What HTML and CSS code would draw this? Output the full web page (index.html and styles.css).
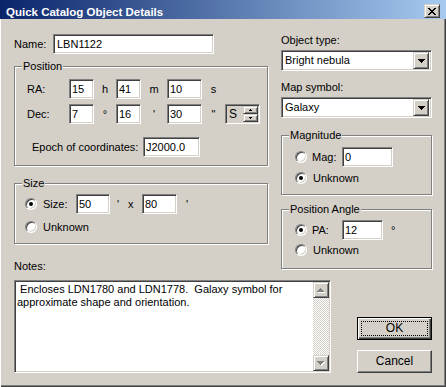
FILE: index.html
```html
<!DOCTYPE html>
<html>
<head>
    <meta charset="utf-8">
    <title>Quick Catalog Object Details</title>
    <link rel="stylesheet" href="styles.css">
</head>
<body>
    <div class="window">
        <div class="titlebar">
            <span class="title">Quick Catalog Object Details</span>
            <span class="close">
                <svg width="8" height="7" viewBox="0 0 8 7" shape-rendering="crispEdges"><path d="M0 0h2v1H0zM6 0h2v1H6zM1 1h2v1H1zM5 1h2v1H5zM2 2h4v1H2zM3 3h2v1H3zM2 4h4v1H2zM1 5h2v1H1zM5 5h2v1H5zM0 6h2v1H0zM6 6h2v1H6z" fill="#000"/></svg>
            </span>
        </div><!-- .titlebar -->

        <div class="content">
            <div class="top">
                <div class="left-col">
                    <div class="name-row">
                        <span class="name-label">Name:</span>
                        <input class="field name-field" value="LBN1122">
                    </div>

                    <div class="group position-group">
                        <span class="legend">Position</span>
                        <div class="coord-row">
                            <span>RA:</span>
                            <input class="field" value="15">
                            <span class="unit">h</span>
                            <input class="field" value="41">
                            <span class="unit">m</span>
                            <input class="field" value="10">
                            <span class="unit">s</span>
                        </div>
                        <div class="coord-row">
                            <span>Dec:</span>
                            <input class="field" value="7">
                            <span class="unit">°</span>
                            <input class="field" value="16">
                            <span class="unit">'</span>
                            <input class="field" value="30">
                            <span class="unit">"</span>
                            <div class="spin">
                                <span class="spin-text">S</span>
                                <div class="spin-btns">
                                    <span class="spin-btn"><svg width="3" height="2" viewBox="0 0 3 2" shape-rendering="crispEdges"><path d="M1 0h1v1H1zM0 1h3v1H0z" fill="#000"/></svg></span>
                                    <span class="spin-btn"><svg width="3" height="2" viewBox="0 0 3 2" shape-rendering="crispEdges"><path d="M0 0h3v1H0zM1 1h1v1H1z" fill="#000"/></svg></span>
                                </div>
                            </div>
                        </div>
                        <div class="epoch-row">
                            <span class="epoch-label">Epoch of coordinates:</span>
                            <input class="field epoch-field" value="J2000.0">
                        </div>
                    </div><!-- .position-group -->

                    <div class="group size-group">
                        <span class="legend">Size</span>
                        <div class="opt-row">
                            <span class="radio on"></span>
                            <span class="opt-label size-label">Size:</span>
                            <input class="field size-field" value="50">
                            <span class="min1">'</span>
                            <span class="times">x</span>
                            <input class="field size-field2" value="80">
                            <span class="min2">'</span>
                        </div>
                        <div class="opt-row">
                            <span class="radio"></span>
                            <span class="opt-label">Unknown</span>
                        </div>
                    </div><!-- .size-group -->

                    <div class="notes-label">Notes:</div>
                </div><!-- .left-col -->

                <div class="right-col">
                    <div class="field-label">Object type:</div>
                    <div class="select">
                        <span class="select-text">Bright nebula</span>
                        <span class="drop-btn"><svg width="7" height="4" viewBox="0 0 7 4" shape-rendering="crispEdges"><path d="M0 0h7v1H0zM1 1h5v1H1zM2 2h3v1H2zM3 3h1v1H3z" fill="#000"/></svg></span>
                    </div>
                    <div class="field-label map-label">Map symbol:</div>
                    <div class="select">
                        <span class="select-text">Galaxy</span>
                        <span class="drop-btn"><svg width="7" height="4" viewBox="0 0 7 4" shape-rendering="crispEdges"><path d="M0 0h7v1H0zM1 1h5v1H1zM2 2h3v1H2zM3 3h1v1H3z" fill="#000"/></svg></span>
                    </div>

                    <div class="group mag-group">
                        <span class="legend">Magnitude</span>
                        <div class="opt-row">
                            <span class="radio"></span>
                            <span class="opt-label short-label">Mag:</span>
                            <input class="field mag-field" value="0">
                        </div>
                        <div class="opt-row">
                            <span class="radio on"></span>
                            <span class="opt-label">Unknown</span>
                        </div>
                    </div><!-- .mag-group -->

                    <div class="group pa-group">
                        <span class="legend">Position Angle</span>
                        <div class="opt-row">
                            <span class="radio on"></span>
                            <span class="opt-label short-label">PA:</span>
                            <input class="field pa-field" value="12">
                            <span class="deg">°</span>
                        </div>
                        <div class="opt-row">
                            <span class="radio"></span>
                            <span class="opt-label">Unknown</span>
                        </div>
                    </div><!-- .pa-group -->
                </div><!-- .right-col -->
            </div><!-- .top -->

            <div class="bottom">
                <div class="notes">
                    <div class="notes-text"> Encloses LDN1780 and LDN1778.  Galaxy symbol for<br>approximate shape and orientation.</div>
                    <div class="scrollbar">
                        <span class="scroll-btn"><svg width="8" height="5" viewBox="0 0 8 5" shape-rendering="crispEdges"><path d="M4 1h1v1H4zM3 2h3v1H3zM2 3h5v1H2zM1 4h7v1H1z" fill="#fff"/><path d="M3 0h1v1H3zM2 1h3v1H2zM1 2h5v1H1zM0 3h7v1H0z" fill="#808080"/></svg></span>
                        <span class="track"></span>
                        <span class="scroll-btn"><svg width="8" height="5" viewBox="0 0 8 5" shape-rendering="crispEdges"><path d="M1 1h7v1H1zM2 2h5v1H2zM3 3h3v1H3zM4 4h1v1H4z" fill="#fff"/><path d="M0 0h7v1H0zM1 1h5v1H1zM2 2h3v1H2zM3 3h1v1H3z" fill="#808080"/></svg></span>
                    </div>
                </div><!-- .notes -->
                <div class="buttons">
                    <div class="btn default"><span class="focus">OK</span></div>
                    <div class="btn">Cancel</div>
                </div>
            </div><!-- .bottom -->
        </div><!-- .content -->
    </div><!-- .window -->
</body>
</html>
```

FILE: styles.css
```css
* {
    margin: 0;
    padding: 0;
    box-sizing: border-box;
}

body {
    background: #d4d0c8;
    font-family: "Liberation Sans", Arial, sans-serif;
    font-size: 11px;
    line-height: 13px;
    color: #000;
    overflow: hidden;
}

.window {
    width: 446px;
    height: 387px;
    background: #d4d0c8;
    box-shadow: inset 1px 0 #fff, inset -1px -1px #404040, inset -2px -2px #808080;
}

/* Title bar */
.titlebar {
    height: 19px;
    display: flex;
    justify-content: space-between;
    align-items: flex-start;
    padding: 5px 6px 0 6px;
    background: linear-gradient(to right, #0a246a, #a6caf0);
}

.title {
    color: #fff;
    font-weight: bold;
    font-size: 11.5px;
    line-height: 14px;
}

.close {
    width: 16px;
    height: 14px;
    margin-top: -1px;
    display: flex;
    align-items: center;
    justify-content: center;
    background: #d4d0c8;
    border: 1px solid;
    border-color: #d4d0c8 #404040 #404040 #d4d0c8;
    box-shadow: inset 1px 1px #fff, inset -1px -1px #808080;
}

.close svg { display: block; }

.content {
    padding: 15px 14px 0 14px;
}

.top {
    display: flex;
    justify-content: space-between;
}

.left-col { width: 254px; }
.right-col { width: 151px; }

/* Sunken edit fields */
.field {
    display: block;
    height: 20px;
    width: 25px;
    padding: 0 2px;
    font: inherit;
    color: #000;
    background: #fff;
    border: 1px solid;
    border-color: #808080 #fff #fff #808080;
    box-shadow: inset 1px 1px #404040, inset -1px -1px #d4d0c8;
    outline: none;
}

.name-row {
    display: flex;
    align-items: center;
    height: 20px;
}

.name-label { width: 39px; }
.name-field { width: 161px; padding-left: 3px; }

/* Etched group boxes */
.group {
    position: relative;
    border: 1px solid #808080;
    box-shadow: inset 1px 1px #fff, 1px 1px #fff;
}

.legend {
    position: absolute;
    top: -7px;
    left: 7px;
    padding: 0 1px;
    background: #d4d0c8;
    line-height: 13px;
}

.position-group {
    margin-top: 12px;
    padding: 12px 0 8px 12px;
}

.coord-row {
    display: grid;
    grid-template-columns: 42px 25px 22px 25px 26px 35px 23px 35px;
    align-items: center;
    height: 20px;
}

.coord-row + .coord-row { margin-top: 5px; }

.coord-row .field:nth-of-type(3) { width: 35px; }

.unit { text-align: center; }

.spin {
    display: flex;
    height: 20px;
    width: 35px;
    background: #d4d0c8;
    border: 1px solid;
    border-color: #808080 #fff #fff #808080;
    box-shadow: inset 1px 1px #404040, inset -1px -1px #d4d0c8;
    padding: 1px;
}

.spin-text {
    flex: 1;
    padding-left: 2px;
    line-height: 16px;
    font-size: 12px;
}

.spin-btns {
    display: flex;
    flex-direction: column;
    width: 15px;
}

.spin-btn {
    flex: 1;
    display: flex;
    align-items: center;
    justify-content: center;
    border: 1px solid;
    border-color: #d4d0c8 #404040 #404040 #d4d0c8;
    box-shadow: inset 1px 1px #fff, inset -1px -1px #808080;
}

.spin-btn svg { display: block; }

.epoch-row {
    display: flex;
    align-items: center;
    height: 20px;
    margin-top: 13px;
    padding-left: 5px;
}

.epoch-label { width: 111px; }
.epoch-field { width: 57px; }

.size-group {
    margin-top: 17px;
    padding: 10px 0 6px 10px;
}

.opt-row {
    display: flex;
    align-items: center;
    height: 20px;
}

.opt-row + .opt-row { margin-top: 3px; }

.radio {
    position: relative;
    flex: none;
    width: 12px;
    height: 12px;
    border-radius: 50%;
    background: #fff;
    border: 1px solid;
    border-color: #808080 #fff #fff #808080;
    box-shadow: inset 1px 1px #404040, inset -1px -1px #d4d0c8;
}

.radio.on::after {
    content: "";
    position: absolute;
    left: 3px;
    top: 3px;
    width: 4px;
    height: 4px;
    border-radius: 50%;
    background: #000;
}

.opt-label { margin-left: 6px; }
.size-label { width: 33px; }
.size-field { width: 34px; }
.size-field2 { width: 35px; }
.min1 { width: 12px; padding-left: 7px; }
.times { width: 20px; padding-left: 6px; }
.min2 { padding-left: 9px; }

.notes-label {
    margin-top: 16px;
}

/* Right column */
.field-label { margin-bottom: 3px; }
.map-label { margin-top: 10px; }

.select {
    display: flex;
    align-items: center;
    height: 21px;
    padding: 2px;
    background: #fff;
    border: 1px solid;
    border-color: #808080 #fff #fff #808080;
    box-shadow: inset 1px 1px #404040, inset -1px -1px #d4d0c8;
}

.select-text {
    flex: 1;
    padding-left: 1px;
}

.drop-btn {
    width: 16px;
    height: 17px;
    display: flex;
    align-items: center;
    justify-content: center;
    background: #d4d0c8;
    border: 1px solid;
    border-color: #d4d0c8 #404040 #404040 #d4d0c8;
    box-shadow: inset 1px 1px #fff, inset -1px -1px #808080;
}

.drop-btn svg { display: block; }

.mag-group {
    margin-top: 17px;
    padding: 11px 0 6px 13px;
}

.mag-group .opt-row + .opt-row { margin-top: 1px; }

.pa-group {
    margin-top: 14px;
    padding: 10px 0 8px 13px;
}

.pa-group .opt-row + .opt-row { margin-top: 0; }

.short-label { width: 30px; margin-left: 5px; }
.mag-field { width: 51px; }
.pa-field { width: 41px; }
.deg { margin-left: 8px; }

/* Notes + buttons */
.bottom {
    display: flex;
    justify-content: space-between;
    align-items: flex-end;
    margin-top: 7px;
}

.notes {
    display: flex;
    width: 317px;
    height: 93px;
    padding: 1px;
    background: #fff;
    border: 1px solid;
    border-color: #808080 #fff #fff #808080;
    box-shadow: inset 1px 1px #404040, inset -1px -1px #d4d0c8;
}

.notes-text {
    flex: 1;
    padding: 1px 0 0 1px;
    white-space: pre-wrap;
}

.scrollbar {
    display: flex;
    flex-direction: column;
    width: 16px;
}

.scroll-btn {
    height: 16px;
    display: flex;
    align-items: center;
    justify-content: center;
    background: #d4d0c8;
    border: 1px solid;
    border-color: #d4d0c8 #404040 #404040 #d4d0c8;
    box-shadow: inset 1px 1px #fff, inset -1px -1px #808080;
}

.scroll-btn svg { display: block; }

.track {
    flex: 1;
    background: repeating-conic-gradient(#d4d0c8 0 25%, #fff 0 50%) 0 0 / 2px 2px;
}

.buttons {
    display: flex;
    flex-direction: column;
    gap: 10px;
    width: 75px;
}

.btn {
    display: flex;
    align-items: center;
    justify-content: center;
    height: 23px;
    background: #d4d0c8;
    border: 1px solid;
    border-color: #fff #404040 #404040 #fff;
    box-shadow: inset -1px -1px #808080;
    font-size: 12px;
}

.btn.default {
    padding: 3px;
    border-color: #000;
    box-shadow: inset 1px 1px #fff, inset -1px -1px #404040, inset -2px -2px #808080;
}

.focus {
    flex: 1;
    align-self: stretch;
    display: flex;
    align-items: center;
    justify-content: center;
    border: 1px dotted #000;
}
```
